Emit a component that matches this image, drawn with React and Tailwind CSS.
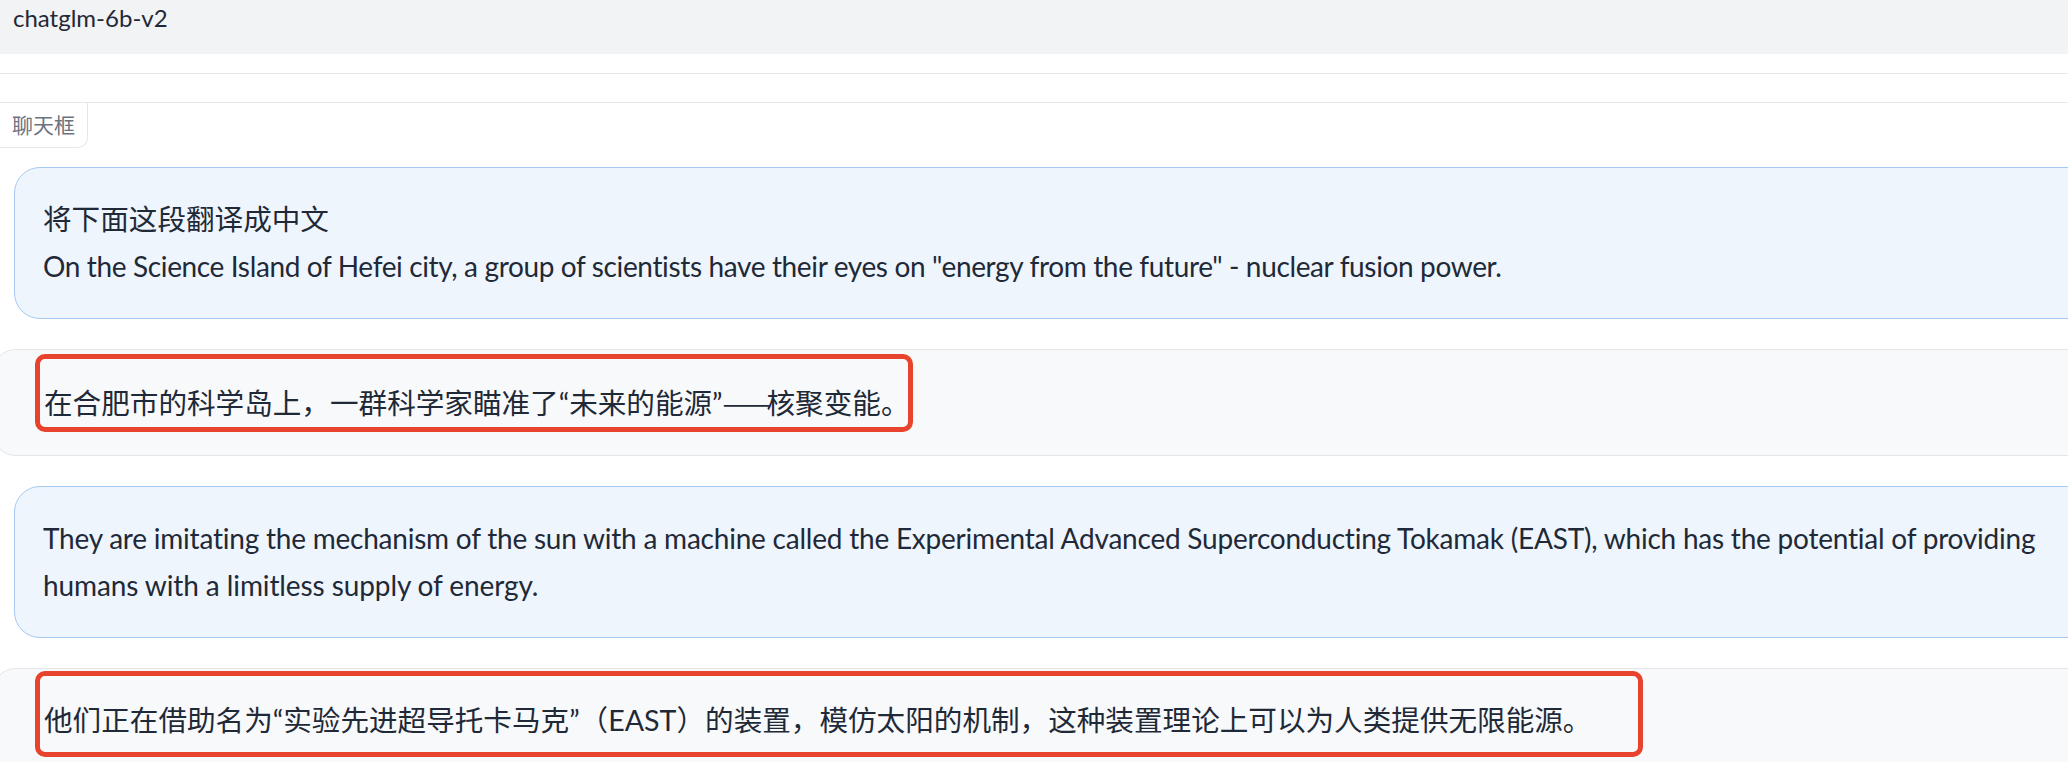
import React from 'react';

// chat transcript shown in the screenshot
// latin lines carry their own tracking so the widths match the screenshot
const messages = [
  {
    role: 'user',
    lines: [
      { text: '将下面这段翻译成中文' },
      {
        text: 'On the Science Island of Hefei city, a group of scientists have their eyes on "energy from the future" - nuclear fusion power.',
        en: 'tracking-[-0.36px]',
      },
    ],
  },
  {
    role: 'bot',
    lines: [
      {
        text: (
          <>
            在合肥市的科学岛上，一群科学家瞄准了“未来的能源”
            <span className="font-['Noto_Sans_CJK_SC',sans-serif] tracking-[-4px]">——</span>
            核聚变能。
          </>
        ),
      },
    ],
    mark: 'top-[4px] h-[78px] w-[878px]',
  },
  {
    role: 'user',
    lines: [
      {
        text: 'They are imitating the mechanism of the sun with a machine called the Experimental Advanced Superconducting Tokamak (EAST), which has the potential of providing',
        en: 'tracking-[-0.22px]',
      },
      { text: 'humans with a limitless supply of energy.', en: 'tracking-[-0.1px]' },
    ],
  },
  {
    role: 'bot',
    lines: [{ text: '他们正在借助名为“实验先进超导托卡马克”（EAST）的装置，模仿太阳的机制，这种装置理论上可以为人类提供无限能源。' }],
    mark: 'top-[2px] h-[86px] w-[1608px]',
  },
];

const Line = ({ line }) => (
  <div className={line.en ? `whitespace-nowrap text-[28px] ${line.en}` : 'whitespace-nowrap'}>
    {line.text}
  </div>
);

const UserBubble = ({ lines }) => (
  <div className="ml-[14px] mr-[-80px] rounded-[26px] border border-[#a6c9f3] bg-[#eef5fd] px-[28px] py-[28px]">
    {lines.map((line, i) => (
      <Line key={i} line={line} />
    ))}
  </div>
);

const BotBubble = ({ lines, mark }) => (
  <div className="relative ml-[-8px] mr-[-80px] rounded-[24px] border border-[#e4e5e9] bg-[#f8f9fb] py-[28px] pl-[51px]">
    {lines.map((line, i) => (
      <Line key={i} line={line} />
    ))}
    {/* red highlight drawn over the answer */}
    <div className={`absolute left-[42px] rounded-[10px] border-[5px] border-[#e8432c] ${mark}`} />
  </div>
);

export default function App() {
  return (
    <div className="h-[762px] w-full overflow-hidden bg-white font-['Lato','Noto_Sans_CJK_SC',sans-serif] text-[#1f2937] [text-spacing-trim:space-all]">
      {/* top bar */}
      <div className="h-[54px] bg-[#f2f3f5] pl-[13px] pt-[2px] text-[24px] leading-[32px]">chatglm-6b-v2</div>
      <div className="h-[19px]" />
      <div className="h-[29px] border-t border-[#e5e7eb]" />

      {/* chatbot block */}
      <div className="border-t border-[#e5e7eb]">
        <div className="flex">
          <span className="flex h-[45px] items-center rounded-br-[10px] border-r border-b border-[#e5e7eb] px-[12px] text-[21px] text-[#6b7280]">
            聊天框
          </span>
        </div>
        <div className="flex flex-col gap-[30px] pt-[19px] text-[28.6px] leading-[47px]">
          {messages.map((m, i) =>
            m.role === 'user' ? (
              <UserBubble key={i} lines={m.lines} />
            ) : (
              <BotBubble key={i} lines={m.lines} mark={m.mark} />
            )
          )}
        </div>
      </div>
    </div>
  );
}
